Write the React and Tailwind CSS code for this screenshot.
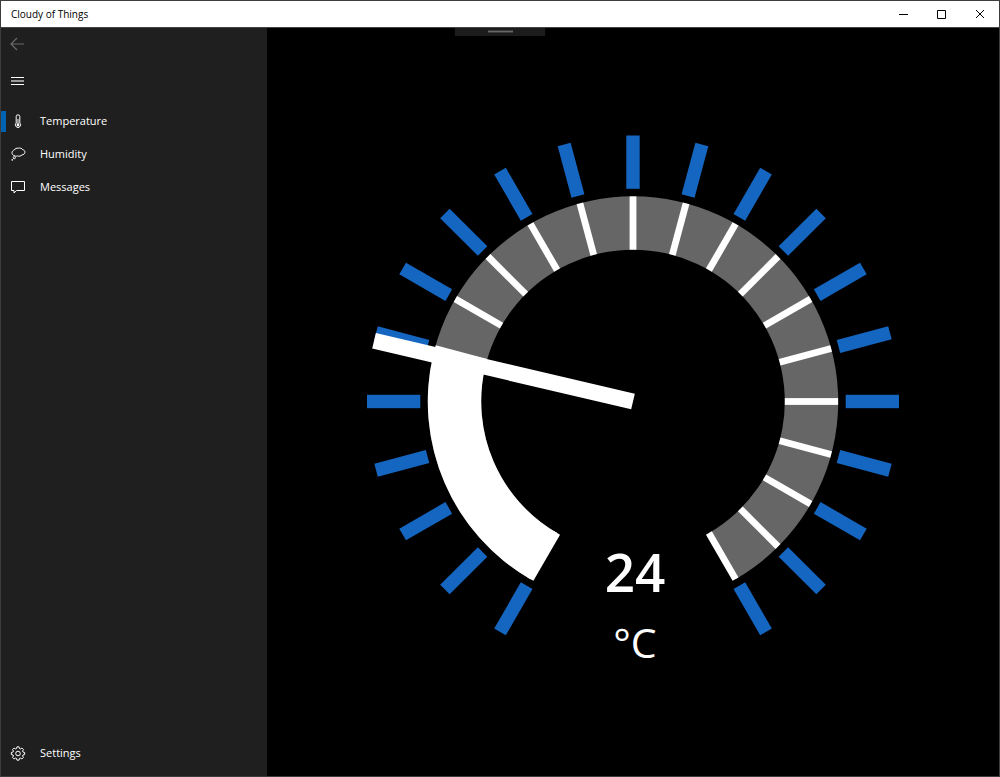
import React from 'react';

const polar = (r, deg) => {
  const a = (deg * Math.PI) / 180;
  return [r * Math.sin(a), -r * Math.cos(a)];
};

const ringPath = (inner, outer, from, to) => {
  const large = to - from > 180 ? 1 : 0;
  const [x1, y1] = polar(outer, from);
  const [x2, y2] = polar(outer, to);
  const [x3, y3] = polar(inner, to);
  const [x4, y4] = polar(inner, from);
  return `M${x1} ${y1}A${outer} ${outer} 0 ${large} 1 ${x2} ${y2}L${x3} ${y3}A${inner} ${inner} 0 ${large} 0 ${x4} ${y4}Z`;
};

const START = -150;
const TICKS = Array.from({ length: 21 }, (_, i) => START + i * 15);

function Gauge({ value, unit }) {
  const angle = START + value * 3;
  return (
    <svg
      className="h-full w-full"
      viewBox="-366 -373.5 732 748"
      role="img"
      aria-label={`${Math.round(value)} ${unit}`}
    >
      <path d={ringPath(151.8, 205.2, START, 150)} fill="#666666" />
      {TICKS.map((t) => (
        <g key={t} transform={`rotate(${t})`}>
          <rect x="-6.7" y="-266" width="13.4" height="53.3" fill="#1566c0" />
          {(t === START || t > angle) && (
            <rect x="-3.4" y="-205.1" width="6.8" height="53.3" fill="#ffffff" />
          )}
        </g>
      ))}
      <path d={ringPath(151.8, 205.2, START, angle)} fill="#ffffff" />
      <rect x="-8" y="-266" width="16" height="266" fill="#ffffff" transform={`rotate(${angle})`} />
      <text x="2" y="190" textAnchor="middle" fill="#ffffff" className="text-[53px] font-semibold">
        {Math.round(value)}
      </text>
      <text x="2" y="256" textAnchor="middle" fill="#ffffff" className="text-[41px]">
        {unit}
      </text>
    </svg>
  );
}

function Icon({ children }) {
  return (
    <svg
      className="h-4 w-4 shrink-0"
      viewBox="0 0 16 16"
      fill="none"
      stroke="currentColor"
      strokeWidth="1"
      aria-hidden="true"
    >
      {children}
    </svg>
  );
}

const BackIcon = () => (
  <Icon>
    <path d="M15 8H2M8 2L2 8L8 14" strokeWidth="1.2" />
  </Icon>
);

const MenuIcon = () => (
  <Icon>
    <path d="M2 4.5H15M2 11.5H15" />
    <path d="M2 8H15" strokeWidth="2" opacity="0.55" />
  </Icon>
);

const ThermometerIcon = () => (
  <Icon>
    <path d="M6.2 9V2.6a1.8 1.8 0 0 1 3.6 0V9a2.6 2.6 0 1 1 -3.6 0Z" />
    <path d="M8 5V11" />
    <circle cx="8" cy="11" r="1.4" fill="currentColor" stroke="none" />
  </Icon>
);

const ThoughtIcon = () => (
  <Icon>
    <path d="M4.6 8.6C3 8.5 1.9 7.1 2 5.7C2.1 4.3 3 3.4 4.2 3.1C4.8 1.6 6.7 0.9 8.3 1.2C10 0.7 12 1.3 12.6 2.6C14.1 2.9 15 4 14.9 5.3C14.8 6.9 13.4 7.9 12 7.8C11 9.2 9 9.6 7.6 8.9C6.6 9.4 5.3 9.3 4.6 8.6Z" />
    <circle cx="4.3" cy="10.7" r="1.1" />
    <circle cx="2.2" cy="12.9" r="0.8" fill="currentColor" stroke="none" />
  </Icon>
);

const MessageIcon = () => (
  <Icon>
    <path d="M1.5 1.5H14.5V10.5H6.6L4 13V10.5H1.5Z" />
  </Icon>
);

const GearIcon = () => (
  <Icon>
    <g transform="translate(-0.25 -0.65)">
      <path d="M7.2 1.5H9.3L9.7 3.2L10.7 3.6L12.2 2.7L13.7 4.2L12.8 5.7L13.2 6.7L14.9 7.1V9.2L13.2 9.6L12.8 10.6L13.7 12.1L12.2 13.6L10.7 12.7L9.7 13.1L9.3 14.8H7.2L6.8 13.1L5.8 12.7L4.3 13.6L2.8 12.1L3.7 10.6L3.3 9.6L1.6 9.2V7.1L3.3 6.7L3.7 5.7L2.8 4.2L4.3 2.7L5.8 3.6L6.8 3.2Z" />
      <circle cx="8.25" cy="8.15" r="2.3" />
    </g>
  </Icon>
);

function NavItem({ icon, label, active }) {
  return (
    <a
      href={`#${label.toLowerCase()}`}
      aria-current={active ? 'page' : undefined}
      className="flex h-[33px] items-center text-[11px] text-white"
    >
      <span className={`h-[21px] w-[5px] ${active ? 'bg-[#0063b1]' : ''}`} />
      <span className="ml-1 mr-[14px] flex">{icon}</span>
      {label}
    </a>
  );
}

function WindowButton({ label, children }) {
  return (
    <button type="button" aria-label={label} className="flex w-[38px] items-center justify-center">
      <svg className="h-[10px] w-[10px]" viewBox="0 0 10 10" fill="none" stroke="#000000" aria-hidden="true">
        {children}
      </svg>
    </button>
  );
}

export default function App() {
  return (
    <div className="relative flex h-screen flex-col border border-[#3c3c3c] bg-black font-['Open_Sans','Noto_Sans',sans-serif]">
      <header className="flex h-[27px] shrink-0 justify-between border-b border-[#444444] bg-white">
        <h1 className="flex items-center pl-[10px] text-[10px] text-black">Cloudy of Things</h1>
        <div className="flex">
          <WindowButton label="Minimize">
            <path d="M0 5.5H9" />
          </WindowButton>
          <WindowButton label="Maximize">
            <path d="M0.5 1.5H8.5V9.5H0.5Z" />
          </WindowButton>
          <WindowButton label="Close">
            <path d="M1 1L9 9M9 1L1 9" />
          </WindowButton>
        </div>
      </header>

      <div className="absolute left-1/2 top-[27px] flex h-2 w-[90px] -translate-x-1/2 justify-center bg-[#1c1c1c] pt-[2px]">
        <span className="h-[3px] w-[25px] border-y border-[#3c3c3c] bg-[#666666]" />
      </div>

      <div className="flex min-h-0 grow">
        <aside className="flex w-[266px] shrink-0 flex-col bg-[#1f1f1f] text-white">
          <button type="button" aria-label="Back" disabled className="flex h-8 w-10 items-center pl-2 text-[#6b6b6b]">
            <BackIcon />
          </button>
          <button type="button" aria-label="Menu" className="mt-[5px] flex h-8 w-10 items-center pl-2">
            <MenuIcon />
          </button>
          <nav className="mt-2 flex grow flex-col pb-[6px]">
            <NavItem icon={<ThermometerIcon />} label="Temperature" active />
            <NavItem icon={<ThoughtIcon />} label="Humidity" />
            <NavItem icon={<MessageIcon />} label="Messages" />
            <div className="grow" />
            <NavItem icon={<GearIcon />} label="Settings" />
          </nav>
        </aside>
        <main className="min-w-0 grow">
          <Gauge value={24.4} unit="°C" />
        </main>
      </div>
    </div>
  );
}
